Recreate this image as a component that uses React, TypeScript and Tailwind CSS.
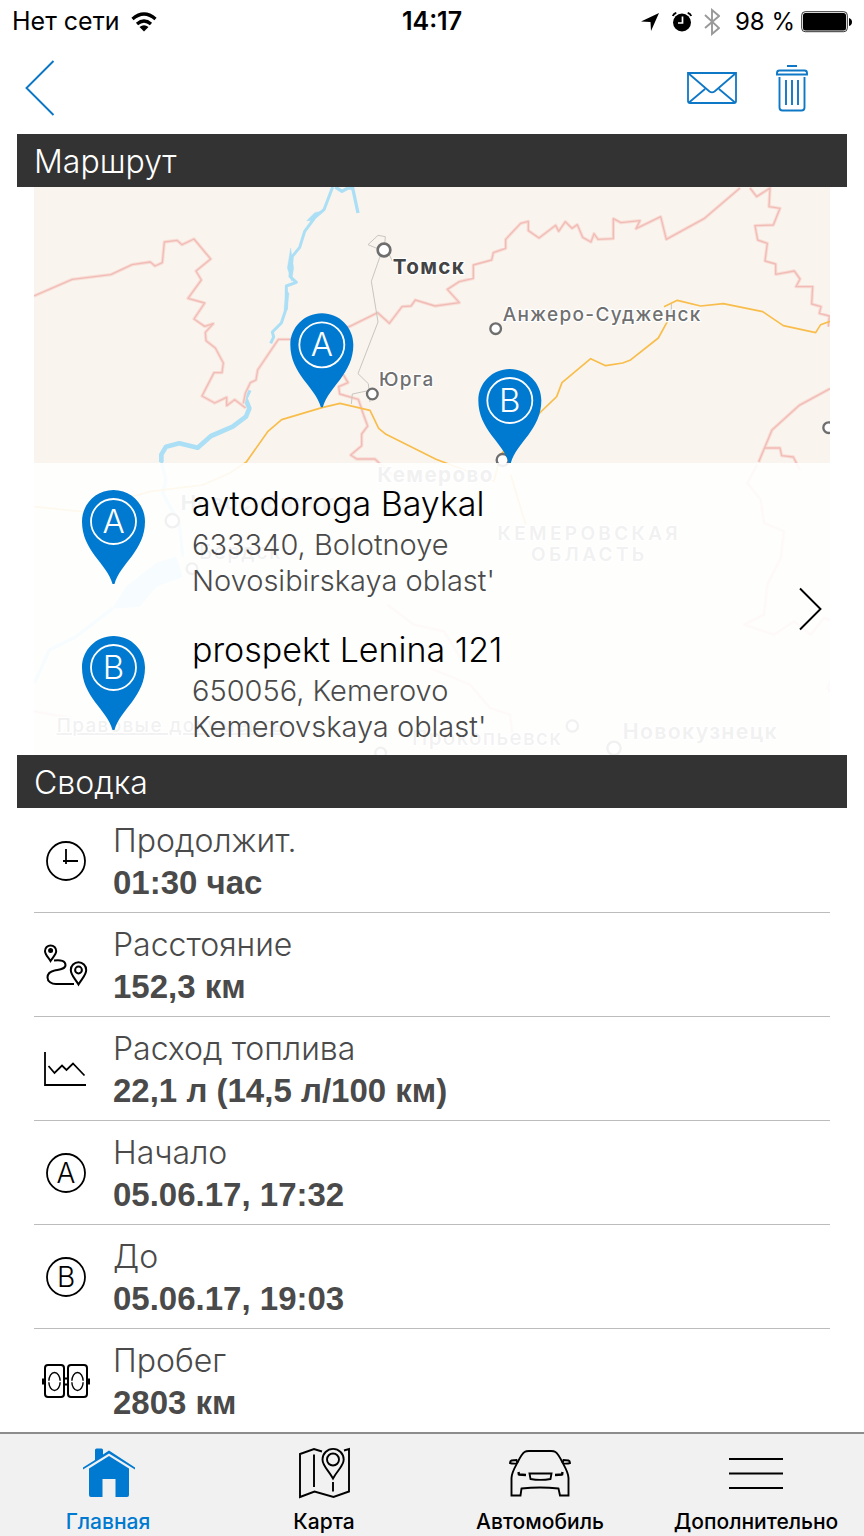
import type { ReactNode } from 'react';

const pinPath =
  'M31.5 0C14 0 0 14 0 31.5C0 46 6 56 13 66C19 74 28 84 30.5 94h2C35 84 44 74 50 66C57 56 63 46 63 31.5C63 14 49 0 31.5 0Z';

function PinShape({ letter }: { letter: string }) {
  return (
    <>
      <path d={pinPath} fill="#007ad0" />
      <circle cx="31.5" cy="31.5" r="22.5" fill="none" stroke="#fff" strokeWidth="1.8" />
      <text x="31.5" y="43" textAnchor="middle" fontSize="33" fill="#fff" className="font-light">
        {letter}
      </text>
    </>
  );
}

function CircleLetter({ letter }: { letter: string }) {
  return (
    <svg className="w-11 h-11" viewBox="0 0 44 44" fill="none" aria-hidden="true">
      <circle cx="22" cy="22" r="19" stroke="#000" strokeWidth="1.8" />
      <text x="22" y="32" textAnchor="middle" fontSize="28" fill="#000" className="font-light">
        {letter}
      </text>
    </svg>
  );
}

const ClockIcon = () => (
  <svg className="w-11 h-11" viewBox="0 0 44 44" fill="none" stroke="#000" strokeWidth="1.8" aria-hidden="true">
    <circle cx="22" cy="22" r="19" />
    <path d="M22 10v15M19 22h15" />
  </svg>
);

const DistanceIcon = () => (
  <svg className="w-11 h-11" viewBox="0 0 44 44" fill="none" stroke="#000" strokeWidth="2" aria-hidden="true">
    <path d="M6.500 18C4 14 1 11.500 1 8a5.600 5.600 0 0 1 11.200 0C12.200 11.500 9 14 6.500 18Z" />
    <circle cx="6.600" cy="7.500" r="1.500" fill="#000" />
    <path d="M34.500 41.500C31 35.500 26.800 32 26.800 27a7.700 7.700 0 0 1 15.400 0C42.200 32 38 35.500 34.500 41.500Z" />
    <circle cx="34.500" cy="27" r="3.400" />
    <path d="M10 17.500c7-1 11.500.5 11.500 4.500 0 4.500-7 4.500-11 5.500-4.500 1-7 3.500-7 7 0 4 4 6.500 8.500 6.500h18" />
  </svg>
);

const ChartIcon = () => (
  <svg className="w-11 h-11" viewBox="0 0 44 44" fill="none" stroke="#000" strokeWidth="1.8" aria-hidden="true">
    <path d="M1 5v33H42" />
    <path d="m4.500 19 6 7 7.500-7.500 4.500 4.500 6.500-6.500L40.500 28.500" />
  </svg>
);

const OdometerIcon = () => (
  <svg className="w-12 h-11" viewBox="0 0 48 44" fill="none" stroke="#000" strokeWidth="2" aria-hidden="true">
    <rect x="3" y="6" width="19" height="32" rx="3" />
    <rect x="26" y="6" width="19" height="32" rx="3" />
    <ellipse cx="12.500" cy="22.500" rx="5.700" ry="9" strokeWidth="1.4" />
    <ellipse cx="35.500" cy="22.500" rx="5.700" ry="9" strokeWidth="1.4" />
    <path d="M3 20.500H1v4h2M45 20.500h2v4h-2M22 19.500h4M22 25.500h4" />
    <path d="M4 22.500h17M27 22.500h17" stroke="#fff" strokeWidth="1.6" />
  </svg>
);

const HomeIcon = () => (
  <svg className="w-14 h-14" viewBox="0 0 56 56" fill="#007ad0" aria-hidden="true">
    <path d="M15 15V5q0-1.500 1.500-1.500h5Q23 3.500 23 5v4.500l6-4L55 22.500v2L29 8.500 3 24.500v-2Z" />
    <path d="M29 11 49 23.500V50q0 2-2 2H35.500V34h-13v18H11q-2 0-2-2V23.500Z" />
  </svg>
);

const MapIcon = () => (
  <svg className="w-14 h-14" viewBox="0 0 56 56" fill="none" stroke="#000" strokeWidth="1.9" aria-hidden="true">
    <path d="M26 6.500 18 4 4 9v43L18.500 46.500l19 5.500 15.500-5.500V4l-5 1.500M18 9.500V42M37 37v9.500" />
    <path d="M37 33.500C32.500 25 26.500 21 26.500 14.500a10.600 10.600 0 0 1 21.200 0C47.700 21 41.500 25 37 33.500Z" />
    <circle cx="37" cy="14.500" r="6" />
  </svg>
);

const CarIcon = () => (
  <svg className="w-16 h-14" viewBox="0 0 64 56" fill="none" stroke="#000" strokeWidth="1.9" aria-hidden="true">
    <path d="M3.500 50.500V33c0-5 3-10 6-15.500 3-6 4.500-9 7-10.500Q18 6 21 6h22q3 0 4.500 1c2.500 1.500 4 4.500 7 10.500 3 5.500 6 10.500 6 15.500v17.500H52l-1.500-7Q32 41.500 13.500 43.500l-1 7Z" />
    <path d="m9.500 18-1-3-5 .5Q2 16 2 18q2 .8 6.500.5M54.500 18l1-3 5 .5q1.500.5 1.500 2.500-2 .8-6.500.5" />
    <path d="M21.500 28.500h22l-1 5.500q-10 1.800-20 0Z" />
    <path d="m10.500 27 .5 3M10.500 29.500l7.500.5M54.500 27l-.5 3M54.500 29.500 47 30" strokeWidth="2.4" />
  </svg>
);

const MenuIcon = () => (
  <svg className="w-14 h-14" viewBox="0 0 56 56" fill="none" stroke="#000" strokeWidth="2" aria-hidden="true">
    <path d="M1 14h54M1 28.500h54M1 43h54" />
  </svg>
);

const regionBorders = [
  'M0 324l115-50 115-14 64-30 55-8 14 12 22-10 6-62 38-5 15 13 36-17 50 60-44 36 16 27-40 55 50 14-32 48 32 22 26-8-24 26 2 25 28 22 24 45-4 29-24 0-36 70 38 21 36-17v25l24-18 33 25',
  'M628 646 634 616 649 584 666 576 671 546 733 454 768 454 946 416 1031 374 1066 406 1104 356 1131 354 1144 336 1203 354 1276 344 1240 304 1276 281 1318 271 1318 231 1373 216 1378 194 1415 181 1415 154 1460 106 1483 100 1483 128 1515 150 1565 112 1574 130 1594 101 1614 121 1630 110 1646 148 1671 162 1680 137 1692 154 1738 152 1738 92 1761 104 1818 98 1806 122 1880 86 1897 154 2010 92 2118 0',
  'M2148 0l20 26 40-26-3 56 33 5-20 50-55 2 8 43 29 10-7 53 32 9v31l56-10 17 24-12 23 50 0-3 52 28 8-5 20 30 8-3 32',
  'M2388 602 2296 652 2214 726 2174 822M2190 780h48l5 23 35 4 20 40',
  'M928 560l14 24-28 12 3 22 56 16 15 45 13 35-18 24v35l-33 28 18 12h55l40 40 70 30',
  'M2170 830l-30 55 40 50 10 70 60 25-10 80-40 80-10 90-60 30 90 30 60-40 50 40 40-50 60 20-10 110-40 80 50 60-10 80',
  'M1188 1440l120 50 60 70 60 20 10 80M1060 1250l80 60 90 20 50 80M0 1570l110 20-20 50',
];

function RouteMap() {
  return (
    <svg
      className="absolute inset-0 w-full h-full"
      viewBox="0 -3 2388 1704"
      preserveAspectRatio="xMidYMin slice"
      fill="none"
      aria-hidden="true"
    >
      <rect y="-3" width="2388" height="1704" fill="#f9f4ed" />

      {/* Rivers and reservoir */}
      <g stroke="#abdff6" strokeLinejoin="round">
        <path d="M896-3 870 65 843 88 812 130 797 178 775 205 768 265 787 283 757 294 757 360 742 405 715 432 719 447 710 466" strokeWidth="9" />
        <path d="M868 68l-26 6-24 24 12 0ZM770 180l-10 60 13 40 6-40ZM755 310l-5 55 10 0 5-50Z" fill="#abdff6" />
        <path d="M904-3l20 13 18-10 14 0 16 75" strokeWidth="10" />
        <path d="M646 606 634 631 646 661 636 686 596 716 531 744 491 779 436 766 396 776 382 800V822" strokeWidth="14" />
        <path d="M382 822l14 54-10 40 50 90 10 100M236 1261l-110 85-80 40-45 100" strokeWidth="10" />
        <path d="M426 1106l20 60-80 30-50 60-80 5 40-65 90-70Z" fill="#abdff6" />
      </g>

      {/* Region borders */}
      <g strokeLinejoin="round">
        <path d={regionBorders.join('')} stroke="#f8ddd6" strokeWidth="10" />
        <path d={regionBorders.join('')} stroke="#f1bcb6" strokeWidth="4" />
      </g>

      {/* Railways */}
      <path
        d="M1040 200l-28 80 20 122-60 155 31 30 5 55M1050 190l-48-20 30-28 22 4-2 25 24 50M1003 608l-48 10-3 30M1912 346v40"
        stroke="#c9c5bf"
        strokeWidth="3"
      />

      {/* Highways */}
      <g stroke="#f8bd4b" strokeWidth="5" strokeLinejoin="round">
        <path d="M0 956 146 971 346 911 506 891 586 856 637 822 701 731 743 695 864 659 918 646 1008 667 1034 721 1056 739 1206 814 1380 880 1400 800 1520 672 1568 626 1584 584 1670 512 1715 533 1766 525 1788 517 1873 450 1900 401" />
        <path d="M1890 356 1930 337 2000 354 2068 347 2186 371 2248 413 2345 434 2360 410 2388 400M1430 860 1475 1010" />
      </g>

      {/* Town dots */}
      <g stroke="#6e6e6e" strokeWidth="7" fill="#fff">
        <circle cx="1050" cy="186" r="19" strokeWidth="8" />
        <circle cx="1015" cy="618" r="16" />
        <circle cx="1385" cy="422" r="16" />
        <circle cx="1406" cy="816" r="18" />
        <circle cx="2384" cy="719" r="16" />
        <circle cx="415" cy="998" r="20" />
        <circle cx="474" cy="1142" r="16" />
        <circle cx="1615" cy="1614" r="17" />
        <circle cx="1740" cy="1681" r="20" />
        <circle cx="1040" cy="1695" r="16" />
      </g>

      <g
        className="font-medium"
        fontSize="57"
        letterSpacing="4"
        fill="#707070"
        stroke="#fff"
        strokeWidth="8"
        strokeLinejoin="round"
        paintOrder="stroke"
      >
        <text x="1076" y="257" className="font-bold" fontSize="62" fill="#444">Томск</text>
        <text x="1035" y="594">Юрга</text>
        <text x="1406" y="398">Анжеро-Судженск</text>
        <text x="1030" y="882" className="font-bold" fontSize="62">Кемерово</text>
        <text x="440" y="967" className="font-bold" fontSize="62">Новосибирск</text>
        <text x="495" y="1112" fontSize="62">Бердск</text>
        <text x="1134" y="1672" fontSize="62">Прокопьевск</text>
        <text x="1766" y="1653" className="font-semibold" fontSize="64">Новокузнецк</text>
        <text x="68" y="1632" textDecoration="underline" fontSize="57">Правовые документы</text>
        <g className="font-semibold" letterSpacing="10" textAnchor="middle">
          <text x="1666" y="1056">КЕМЕРОВСКАЯ</text>
          <text x="1666" y="1118">ОБЛАСТЬ</text>
        </g>
      </g>

      <g transform="translate(769 376) scale(3)">
        <PinShape letter="A" />
      </g>
      <g transform="translate(1333 543) scale(3)">
        <PinShape letter="B" />
      </g>
    </svg>
  );
}

const stops = [
  { letter: 'A', street: 'avtodoroga Baykal', city: '633340, Bolotnoye', region: "Novosibirskaya oblast'" },
  { letter: 'B', street: 'prospekt Lenina 121', city: '650056, Kemerovo', region: "Kemerovskaya oblast'" },
];

const summary: { icon: ReactNode; label: string; value: string }[] = [
  { icon: <ClockIcon />, label: 'Продолжит.', value: '01:30 час' },
  { icon: <DistanceIcon />, label: 'Расстояние', value: '152,3 км' },
  { icon: <ChartIcon />, label: 'Расход топлива', value: '22,1 л (14,5 л/100 км)' },
  { icon: <CircleLetter letter="A" />, label: 'Начало', value: '05.06.17, 17:32' },
  { icon: <CircleLetter letter="B" />, label: 'До', value: '05.06.17, 19:03' },
  { icon: <OdometerIcon />, label: 'Пробег', value: '2803 км' },
];

const tabs = [
  { icon: <HomeIcon />, label: 'Главная', active: true },
  { icon: <MapIcon />, label: 'Карта', active: false },
  { icon: <CarIcon />, label: 'Автомобиль', active: false },
  { icon: <MenuIcon />, label: 'Дополнительно', active: false },
];

function StatusBar() {
  return (
    <div className="grid grid-cols-3 items-center h-11 px-3 text-[25px] text-black">
      <div className="flex items-center gap-[10px]">
        <span>Нет сети</span>
        <svg className="w-7 h-5" viewBox="0 0 28 20" fill="none" stroke="#000" strokeWidth="3.3" aria-hidden="true">
          <path d="M2.500 7q11.500-10 23 0M7 12q7-6 14 0" />
          <path d="M9.500 15q4.500-3.500 9 0L14 19.500Z" fill="#000" stroke="none" />
        </svg>
      </div>
      <span className="text-center font-semibold">14:17</span>
      <div className="flex items-center justify-end">
        <svg className="w-5 h-5 mr-3" viewBox="0 0 20 20" aria-hidden="true">
          <path d="M19 1 11 19l-.5-9L1 9.500Z" />
        </svg>
        <svg className="w-5 h-5 mr-3" viewBox="0 0 20 20" fill="none" stroke="#000" aria-hidden="true">
          <circle cx="10" cy="10.500" r="9" fill="#000" stroke="none" />
          <path d="M.8 4q1-2.500 3.500-3.200M19.200 4q-1-2.500-3.500-3.200" strokeWidth="1.8" />
          <path d="M10.500 4.500V11H6" stroke="#fff" strokeWidth="1.7" />
        </svg>
        <svg className="w-4 h-7 mr-[15px]" viewBox="0 0 16 28" fill="none" stroke="#999" strokeWidth="1.9" aria-hidden="true">
          <path d="m1 7 14 13-7 6V2l7 6L1 20" />
        </svg>
        <span className="mr-[6px] text-2xl whitespace-nowrap">98 %</span>
        <svg className="w-[51px] h-[22px]" viewBox="0 0 51 22" aria-hidden="true">
          <rect x=".7" y=".7" width="45.600" height="20" rx="3.500" fill="#fff" stroke="#333" />
          <rect x="2" y="2" width="43" height="17.500" rx="2.500" />
          <path d="M48 7q3 1 3 4t-3 4Z" />
        </svg>
      </div>
    </div>
  );
}

function SectionTitle({ children }: { children: ReactNode }) {
  return (
    <h2 className="mx-[17px] h-[53px] flex items-center bg-[#333333] px-[17px] pt-[2px] text-[32px] font-light text-white">
      {children}
    </h2>
  );
}

export default function App() {
  return (
    <div className="min-h-screen flex flex-col bg-white font-['Inter','Liberation_Sans',sans-serif]">
      <StatusBar />

      <header className="flex items-center justify-between h-[90px] pb-[2px] pl-6 pr-14">
        <button type="button" aria-label="Назад">
          <svg className="w-8 h-14" viewBox="0 0 32 56" fill="none" stroke="#0b76c4" strokeWidth="1.9" aria-hidden="true">
            <path d="M29.500 1 2.500 28l27 27" />
          </svg>
        </button>
        <div className="flex items-center gap-[38px]">
          <button type="button" aria-label="Отправить">
            <svg className="w-[52px] h-8" viewBox="0 0 52 32" fill="none" stroke="#0f78c6" strokeWidth="1.8" aria-hidden="true">
              <path d="M2 1h48v28q0 2-2 2H4q-2 0-2-2Z" />
              <path d="m2 1 21.500 18.500q2.500 1.800 5 0L50 1M19 17 3 30.500M33 17l16 13.500" />
            </svg>
          </button>
          <button type="button" aria-label="Удалить">
            <svg className="w-8 h-12" viewBox="0 0 32 48" fill="none" stroke="#0f78c6" strokeWidth="1.9" aria-hidden="true">
              <path d="M11 2h10M1 10.500V9q0-2.500 2.500-2.500h25Q31 6.500 31 9v1.500Z" />
              <path d="M3.500 13v30.500q0 3 3 3h19q3 0 3-3V13M10 16v25M16 16v25M22 16v25" />
            </svg>
          </button>
        </div>
      </header>

      <main className="flex-1">
        <SectionTitle>Маршрут</SectionTitle>
        <section className="relative mx-[34px] pt-[276px] overflow-hidden">
          <RouteMap />
          <a href="#route" className="relative flex items-center bg-white/90 pr-2">
            <div className="flex-1">
              {stops.map((stop) => (
                <div key={stop.letter} className="flex h-[146px] pt-[21px] pl-12">
                  <svg className="w-[63px] h-[94px] mt-[6px] shrink-0" viewBox="0 0 63 94" aria-hidden="true">
                    <PinShape letter={stop.letter} />
                  </svg>
                  <div className="ml-[47px] text-[29px] leading-9 font-light text-[#4a4a4a]">
                    <p className="mb-[3px] text-[34px] leading-10 text-black">{stop.street}</p>
                    <p>{stop.city}</p>
                    <p>{stop.region}</p>
                  </div>
                </div>
              ))}
            </div>
            <svg className="w-6 h-11" viewBox="0 0 24 44" fill="none" stroke="#000" strokeWidth="1.9" aria-hidden="true">
              <path d="m2 1.500 20.500 20.500L2 42.500" />
            </svg>
          </a>
        </section>

        <SectionTitle>Сводка</SectionTitle>
        <dl className="mx-[34px] pt-px">
          {summary.map((row) => (
            <div
              key={row.label}
              className="flex items-center h-[104px] border-b border-[#bcbcbc] last:h-[103px] last:border-0"
            >
              <div className="w-16 flex justify-center">{row.icon}</div>
              <div className="ml-[15px] pt-[2px] text-[32px] leading-[42px] text-[#4a4a4a]">
                <dt className="font-light">{row.label}</dt>
                <dd className="font-['Liberation_Sans',sans-serif] text-[33px] font-bold">{row.value}</dd>
              </div>
            </div>
          ))}
        </dl>
      </main>

      <nav className="grid grid-cols-4 h-[104px] bg-[#f1f1f1] border-t-2 border-[#8c8c8c]">
        {tabs.map((tab) => (
          <button
            key={tab.label}
            type="button"
            className={`flex flex-col items-center pt-[11px] text-[21px] font-medium ${
              tab.active ? 'text-[#007ad0]' : 'text-black'
            }`}
          >
            {tab.icon}
            <span className="mt-[5px]">{tab.label}</span>
          </button>
        ))}
      </nav>
    </div>
  );
}
